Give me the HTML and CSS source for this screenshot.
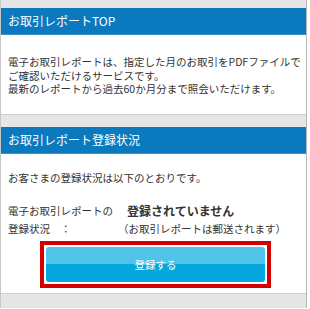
FILE: index.html
```html
<!DOCTYPE html>
<html lang="ja">
<head>
<meta charset="utf-8">
<link rel="stylesheet" href="styles.css">
</head>
<body>
<div class="page">
  <div class="gap gap-top"></div>
  <section class="card">
    <h2 class="card-title">お取引レポートTOP</h2>
    <div class="card-body intro">
      <p>電子お取引レポートは、指定した月のお取引をPDFファイルで<br>ご確認いただけるサービスです。<br>最新のレポートから過去60か月分まで照会いただけます。</p>
    </div>
  </section>
  <div class="gap"></div>
  <section class="card">
    <h2 class="card-title">お取引レポート登録状況</h2>
    <div class="card-body status">
      <p class="lead">お客さまの登録状況は以下のとおりです。</p>
      <div class="status-grid">
        <div class="label">電子お取引レポートの<br>登録状況　：</div>
        <div class="value">
          <div class="value-main">登録されていません</div>
          <div class="value-note">（お取引レポートは郵送されます）</div>
        </div>
      </div>
      <div class="btn-wrap">
        <button class="btn" type="button">登録する</button>
      </div>
    </div>
  </section>
  <div class="gap gap-bottom"></div>
</div>
</body>
</html>
```
FILE: styles.css
```css
html, body {
  margin: 0;
  padding: 0;
  background: #ffffff;
}
body {
  font-family: "Noto Sans CJK JP", "Noto Sans", sans-serif;
  color: #333333;
  width: 310px;
  height: 309px;
  overflow: hidden;
}
.page {
  width: 305px;
  border-left: 1px solid #c8c8c8;
  border-right: 1px solid #b5b5b5;
  background: #e6e6e6;
}
.gap {
  height: 12px;
  background: #e6e6e6;
  border-top: 1px solid #cfcfcf;
}
.gap-top {
  height: 8px;
  border-top: none;
}
.gap-bottom {
  height: 14px;
  border-top: 1px dotted #bdbdbd;
}
.card {
  background: #ffffff;
}
.card-title {
  margin: 0;
  height: 27px;
  line-height: 26px;
  padding-left: 7px;
  background: #0a79bd;
  color: #ffffff;
  font-size: 12px;
  font-weight: normal;
  border-bottom: 1px solid #3a93c9;
  box-sizing: border-box;
}
.card-body {
  font-size: 10.5px;
}
.card-body p {
  margin: 0;
}
.intro {
  padding: 20px 4px 0 7px;
  line-height: 13.5px;
  height: 79px;
  box-sizing: border-box;
  white-space: nowrap;
}
.status {
  padding: 17px 4px 5px 7px;
  white-space: nowrap;
}
.lead {
  line-height: 14px;
}
.status-grid {
  display: grid;
  grid-template-columns: 110px 1fr;
  margin-top: 17px;
  line-height: 18px;
}
.value-main {
  font-weight: bold;
  font-size: 12px;
  padding-left: 9px;
}
.btn-wrap {
  margin: 3px 0 0 32px;
  width: 219px;
  height: 35px;
  border: 4px solid #d40000;
  padding: 2px;
  background: #ffffff;
}
.btn {
  display: block;
  width: 100%;
  height: 100%;
  border: none;
  border-radius: 3px;
  background: linear-gradient(to bottom, #4fc4e8 0%, #4fc4e8 50%, #05a7de 50%, #05a7de 100%);
  color: #ffffff;
  font-family: inherit;
  font-size: 10.5px;
  padding: 0;
}
```
